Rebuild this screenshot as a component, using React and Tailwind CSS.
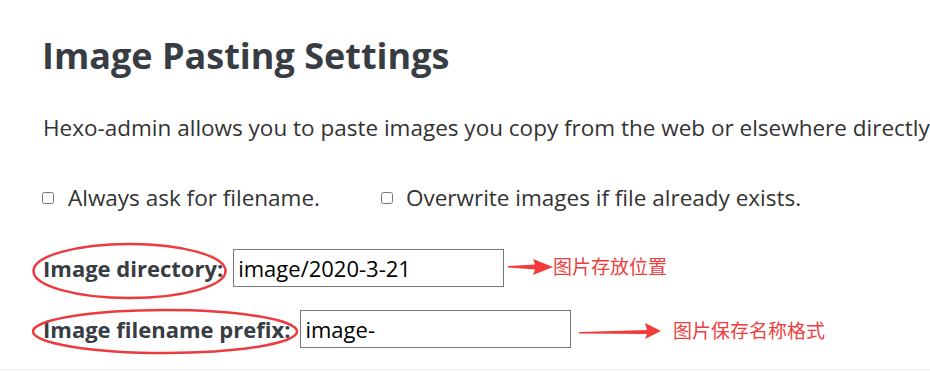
export default function App() {
  return (
    <div className="relative w-[930px] h-[371px] overflow-hidden bg-white font-['Open_Sans',sans-serif]">
      <div className="pl-[42px] pt-[34px]">
        <h1 className="text-[36px] leading-[44px] font-bold text-[#373d43]">
          Image Pasting Settings
        </h1>
        <p className="mt-[33px] ml-[1px] whitespace-nowrap text-[22.5px] leading-[33px] text-[#333]">
          Hexo-admin allows you to paste images you copy from the web or elsewhere directly
        </p>
        <div className="mt-[37px] flex items-center text-[22.5px] leading-[33px] text-[#333]">
          <label className="flex items-center">
            <input type="checkbox" className="w-[12px] h-[12px] m-0" />
            <span className="ml-[14px]">Always ask for filename.</span>
          </label>
          <label className="ml-[61px] flex items-center">
            <input type="checkbox" className="w-[12px] h-[12px] m-0" />
            <span className="ml-[13px]">Overwrite images if file already exists.</span>
          </label>
        </div>
        <div className="mt-[35px] flex flex-col gap-[23px] text-[22px] leading-[33px]">
          <div className="flex items-center">
            <span className="font-bold text-[#373d43] ml-[1px]">Image directory:</span>
            <input
              defaultValue="image/2020-3-21"
              className="ml-[10px] w-[271px] h-[38px] border border-[#767676] px-[4px] text-black outline-none"
            />
          </div>
          <div className="flex items-center">
            <span className="font-bold text-[#373d43] ml-[1px]">Image filename prefix:</span>
            <input
              defaultValue="image-"
              className="ml-[10px] w-[271px] h-[38px] border border-[#767676] px-[4px] text-black outline-none"
            />
          </div>
        </div>
      </div>
      <div className="absolute left-0 right-0 bottom-[1px] h-px bg-[#eeeeee]" />

      {/* annotations */}
      <svg className="absolute inset-0 pointer-events-none" width="930" height="371">
        <ellipse cx="129.5" cy="271" rx="96" ry="27" fill="none" stroke="#ec3a3f" strokeWidth="2.5" />
        <ellipse cx="165" cy="331.5" rx="132" ry="21.5" fill="none" stroke="#ec3a3f" strokeWidth="2.5" />
        <polygon points="508,266 535,264.5 533,259 553,267 533,275 535,269.5 508,267.5" fill="#f23b3b" />
        <polygon points="579,332 647,330 645,323 661,331 645,339 647,334 579,333.5" fill="#f23b3b" />
      </svg>
      <span className="absolute left-[553px] top-[254px] text-[19px] leading-[24px] text-[#ef3d3d] font-['Noto_Sans_CJK_SC',sans-serif]">
        图片存放位置
      </span>
      <span className="absolute left-[673px] top-[318px] text-[19px] leading-[24px] text-[#ef3d3d] font-['Noto_Sans_CJK_SC',sans-serif]">
        图片保存名称格式
      </span>
    </div>
  );
}
